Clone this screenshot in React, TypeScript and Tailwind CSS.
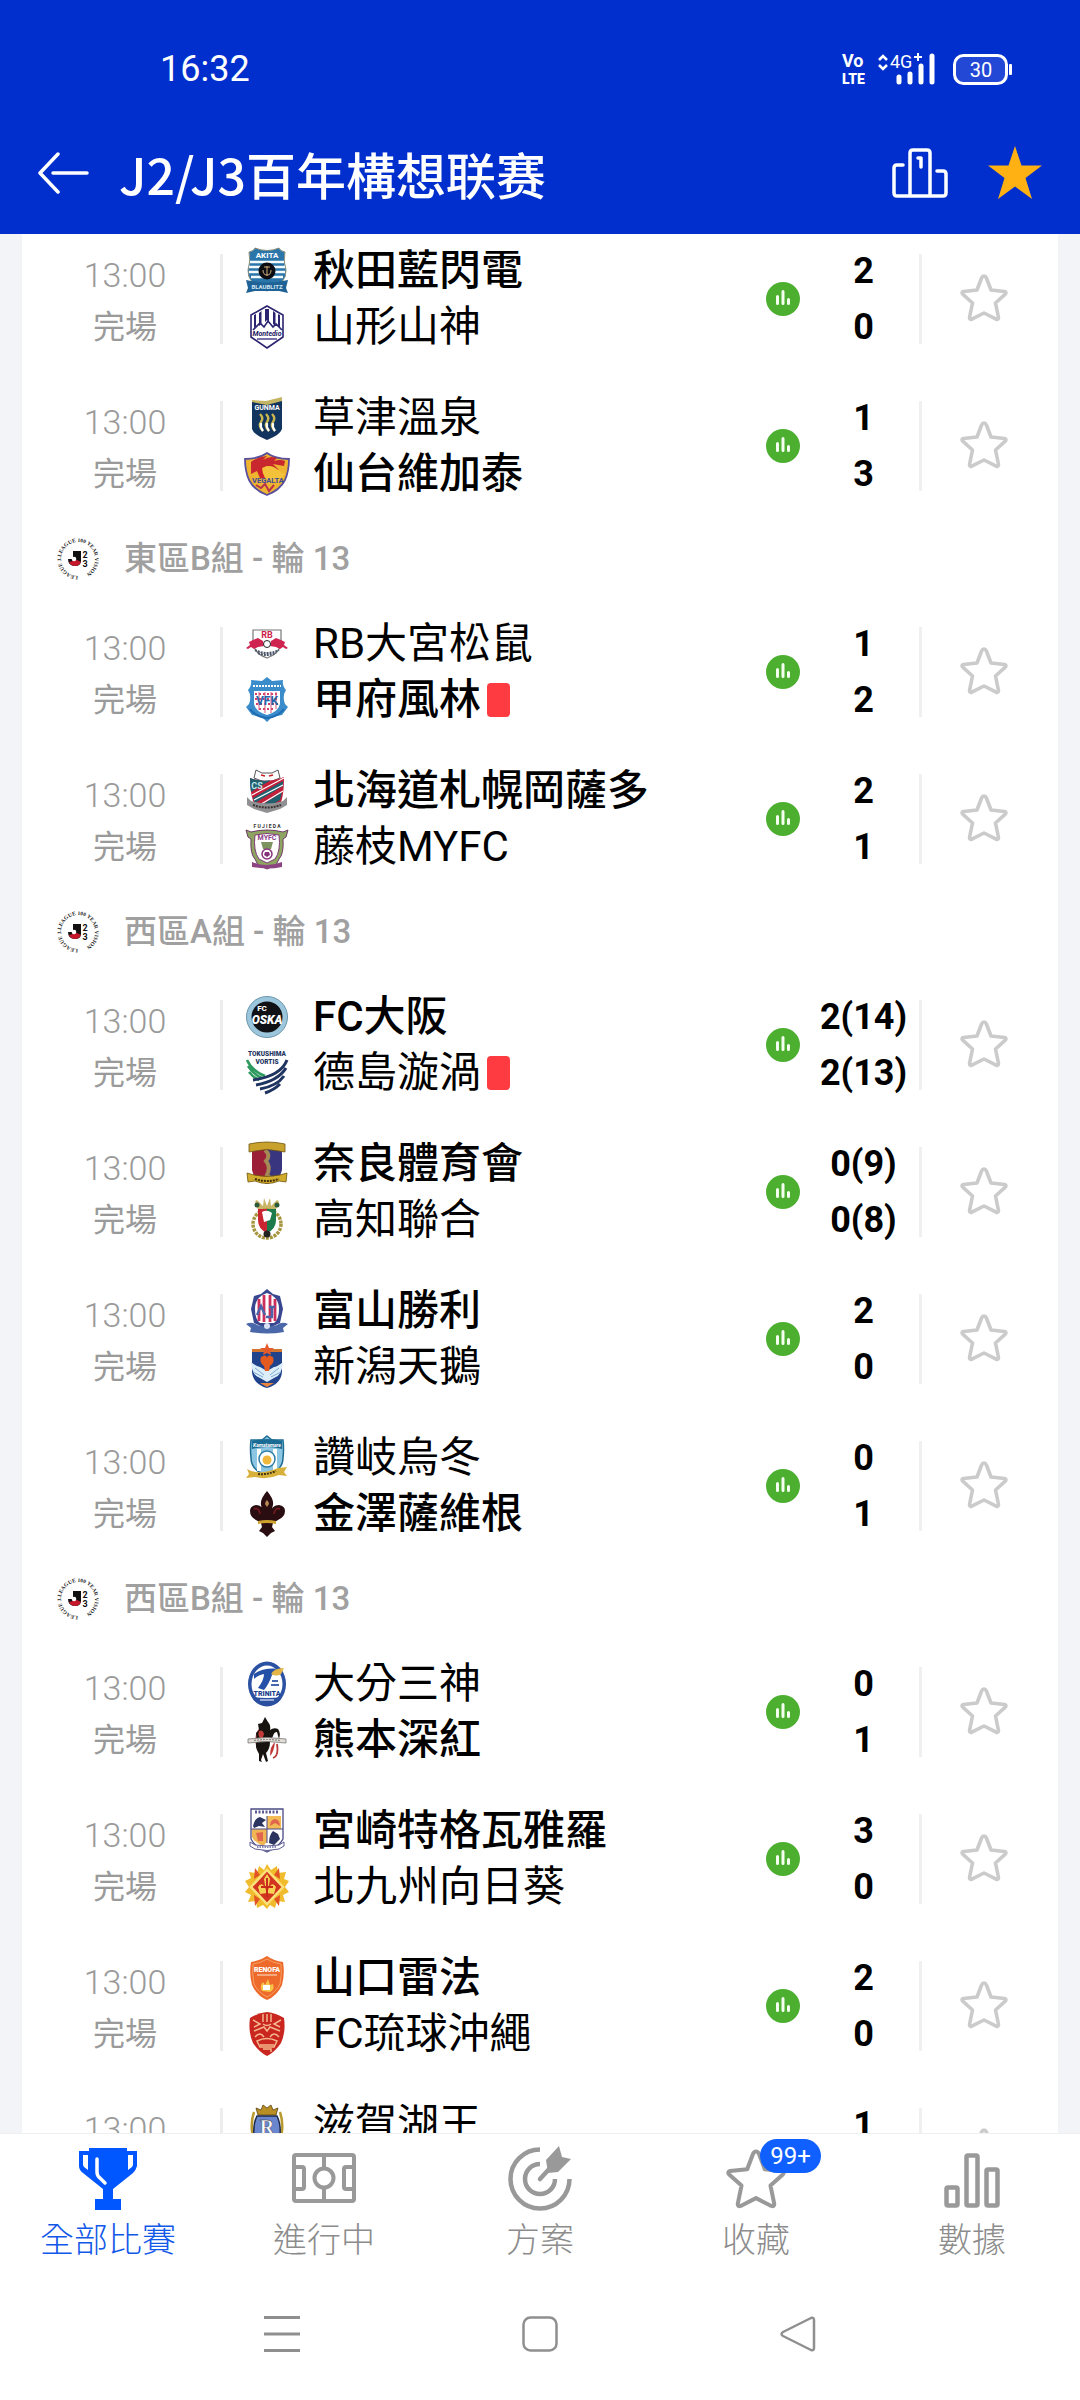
import type { ReactNode } from "react";

type Side = { name: string; crest: string; score: string; win?: boolean; red?: boolean };
type Match = { home: Side; away?: Side };
type Group = { title?: string; matches: Match[] };

const groups: Group[] = [
  {
    matches: [
      {
        home: { name: "秋田藍閃電", crest: "akita", score: "2", win: true },
        away: { name: "山形山神", crest: "yamagata", score: "0" },
      },
      {
        home: { name: "草津溫泉", crest: "gunma", score: "1" },
        away: { name: "仙台維加泰", crest: "sendai", score: "3", win: true },
      },
    ],
  },
  {
    title: "東區B組 - 輪 13",
    matches: [
      {
        home: { name: "RB大宮松鼠", crest: "omiya", score: "1" },
        away: { name: "甲府風林", crest: "kofu", score: "2", win: true, red: true },
      },
      {
        home: { name: "北海道札幌岡薩多", crest: "sapporo", score: "2", win: true },
        away: { name: "藤枝MYFC", crest: "fujieda", score: "1" },
      },
    ],
  },
  {
    title: "西區A組 - 輪 13",
    matches: [
      {
        home: { name: "FC大阪", crest: "osaka", score: "2(14)", win: true },
        away: { name: "德島漩渦", crest: "tokushima", score: "2(13)", red: true },
      },
      {
        home: { name: "奈良體育會", crest: "nara", score: "0(9)", win: true },
        away: { name: "高知聯合", crest: "kochi", score: "0(8)" },
      },
      {
        home: { name: "富山勝利", crest: "toyama", score: "2", win: true },
        away: { name: "新潟天鵝", crest: "niigata", score: "0" },
      },
      {
        home: { name: "讚岐烏冬", crest: "sanuki", score: "0" },
        away: { name: "金澤薩維根", crest: "kanazawa", score: "1", win: true },
      },
    ],
  },
  {
    title: "西區B組 - 輪 13",
    matches: [
      {
        home: { name: "大分三神", crest: "oita", score: "0" },
        away: { name: "熊本深紅", crest: "kumamoto", score: "1", win: true },
      },
      {
        home: { name: "宮崎特格瓦雅羅", crest: "miyazaki", score: "3", win: true },
        away: { name: "北九州向日葵", crest: "kitakyushu", score: "0" },
      },
      {
        home: { name: "山口雷法", crest: "yamaguchi", score: "2", win: true },
        away: { name: "FC琉球沖繩", crest: "ryukyu", score: "0" },
      },
      {
        home: { name: "滋賀湖王", crest: "shiga", score: "1" },
      },
    ],
  },
];

const crests: Record<string, ReactNode> = {
  akita: (
    <>
      <path d="M4 3q5-1 6-4 12 5 24 0 1 3 6 4-2 9 1 18 1 14-19 21Q2 35 3 21 6 12 4 3z" fill="#2a76ab" stroke="#8b8f7c" strokeWidth="1" />
      <path d="M5 13h34M4 18h36M4 23h36M6 28h32" stroke="#f4fbff" strokeWidth="2.4" />
      <circle cx="22" cy="22" r="8.5" fill="#0c0d12" />
      <path d="M22 17v10M18 21q0 5 4 5t4-5M19 18h6" fill="none" stroke="#cfae7a" strokeWidth="1" />
      <path d="M1 31q20 5 42 0l-2 8 2 5-9-2H10l-9 2 2-5z" fill="#1f6396" />
      <text x="22" y="9" textAnchor="middle" fontSize="8" fontWeight="700" fill="#fff">AKITA</text>
      <text x="22" y="40" textAnchor="middle" fontSize="6" fontWeight="700" fill="#cfe6f4">BLAUBLITZ</text>
    </>
  ),
  yamagata: (
    <>
      <path d="M22 1l16 9v22L22 43 6 32V10z" fill="#fff" stroke="#2a2370" strokeWidth="1.6" />
      <path d="M9 10l2-1v12l-2 2zM14 8l2.500-2v13l-2.500 2zM20 4l4 0v13l-2-2-2 2zM28 6l2.500 2v13L28 19zM33 9l2 1v13l-2-2z" fill="#2a2370" />
      <path d="M8 25l7-7 4 4 4-6 5 6 3-3 6 6" fill="none" stroke="#2a2370" strokeWidth="1.6" />
      <text x="22" y="31" textAnchor="middle" fontSize="7" fontStyle="italic" fontWeight="700" fill="#1b1763">Montedio</text>
      <path d="M12 34h20" stroke="#4a448c" strokeWidth="1.500" />
    </>
  ),
  gunma: (
    <>
      <path d="M7 5l14 1 16-4v31q-2 6-15 11Q9 39 7 33z" fill="#12355f" />
      <path d="M7 4l14 1 16-4v4L22 9 7 6z" fill="#c4b565" />
      <text x="22" y="14" textAnchor="middle" fontSize="7" fontWeight="700" fill="#fff">GUNMA</text>
      <path d="M15 18q4 4 1 8t2 9M21 18q4 4 1 8t2 9M27 18q4 4 1 8t2 9" fill="none" stroke="#c9b64f" strokeWidth="2.400" />
      <path d="M16 27q-1 4 2 8M22 27q-1 4 2 8M28 27q-1 4 2 8" fill="none" stroke="#fff" strokeWidth="2.200" />
    </>
  ),
  sendai: (
    <>
      <path d="M22 1q8 6 22 6 0 12-4 21-5 10-18 15Q9 38 4 28 0 19 0 7q14 0 22-6z" fill="#eeb32f" stroke="#5a509c" strokeWidth="1.800" />
      <path d="M6 10Q12 5 22 4l-4 4q7-5 14-2l-3 3q6-2 11 0l-1 5-11-2 6 6-12-4-6 3-10 5z" fill="#c8272f" />
      <path d="M12 19l6-5 7 5-2 8-8-1z" fill="#ce2129" />
      <path d="M17 16q9-5 16 2l7 4q-5 9-14 8-8-2-9-14z" fill="#f3c13a" />
      <path d="M11 33l5 3 4-4 4 7 5-6" fill="none" stroke="#b9344a" strokeWidth="2" />
      <text x="23" y="31" textAnchor="middle" fontSize="7.500" fontWeight="700" fill="#3e4a9b">VEGALTA</text>
    </>
  ),
  omiya: (
    <>
      <path d="M8 8h28v14q-2 10-14 14Q10 32 8 22z" fill="#fff" stroke="#777" strokeWidth="1.200" />
      <text x="22" y="16" textAnchor="middle" fontSize="9" fontWeight="700" fill="#d0214b">RB</text>
      <path d="M1 26l4-3-1-3 4-2 5-2 5 3 1 5-6 1-4 2-3-2-3 2zM43 26l-4-3 1-3-4-2-5-2-5 3-1 5 6 1 4 2 3-2 3 2z" fill="#cf2350" />
      <circle cx="22" cy="22" r="3.500" fill="#fff" stroke="#222" />
      <path d="M10 28q12 6 24 0M13 31q9 4 18 0" fill="none" stroke="#4a5568" strokeWidth="2" strokeDasharray="2 1" />
    </>
  ),
  kofu: (
    <>
      <path d="M22-1l5 4 11-1q-1 6 3 10-4 6-1 14l3 3-6 8-10 2-5 5-5-5-10-2-6-8 3-3Q7 18 3 12 7 8 6 2l11 1z" fill="#3a8ccb" />
      <path d="M9 13h26v13q-2 8-13 11Q11 34 9 26z" fill="#fff" />
      <path d="M10 16h24M10 21h24M11 26h22M14 31h16" stroke="#d2406a" strokeWidth="1.800" strokeDasharray="2 2" />
      <path d="M14 14v18M20 14v21M26 14v21M31 14v17" stroke="#db5b7e" strokeWidth="1" />
      <path d="M8 8h28" stroke="#fff" strokeWidth="2" strokeDasharray="2 1" />
      <text x="22" y="27" textAnchor="middle" fontSize="12" fontWeight="700" fill="#2467ac">VFK</text>
      <path d="M5 31q6 8 17 9 11-1 17-9" fill="none" stroke="#1d6bb3" strokeWidth="2" />
    </>
  ),
  sapporo: (
    <>
      <path d="M11 1l6 3h10l6-3 2 8-13 5L9 9z" fill="#fff" stroke="#555" />
      <path d="M16 6l4 1M28 6l-4 1" stroke="#c22" strokeWidth="1.500" />
      <path d="M5 9q17 6 34-1 0 22-5 29L22 43 10 37Q5 26 5 9z" fill="#c2203a" />
      <path d="M5 9q10 4 21 2L6 23q-1-6-1-14zM8 29L38 12v5L10 34zM14 38l23-15-2 8-15 9z" fill="#1f5f6e" />
      <path d="M7 26L39 9M9 31l29-15M13 37l25-15" stroke="#fff" strokeWidth="1.200" />
      <text x="12" y="20" textAnchor="middle" fontSize="9" fontWeight="700" fill="#bfe4e8">CS</text>
      <path d="M2 28l4 4q16 5 32 0l4-4v8l-7 4-13 4-13-4-7-4z" fill="#8f9092" />
      <path d="M8 36q14 5 28 0" stroke="#3b3032" strokeWidth="2" fill="none" strokeDasharray="2 1" />
    </>
  ),
  fujieda: (
    <>
      <text x="22" y="3" textAnchor="middle" fontSize="5" fontWeight="700" fill="#333">F U J I E D A</text>
      <path d="M6 7q16-4 32 0l5-2-2 7-3 2q1 15-4 20l-3 6-9 4-9-4-3-6Q5 29 6 14l-3-2-2-7z" fill="#8da561" stroke="#6e3a67" />
      <path d="M10 10q12-3 24 0 2 16-4 24l-8 4-8-4Q8 26 10 10z" fill="#fff" stroke="#7d3b75" />
      <text x="22" y="15" textAnchor="middle" fontSize="7" fontWeight="700" fill="#8a3b86">MYFC</text>
      <path d="M16 17h12l-2 7h-8z" fill="#7c9360" />
      <circle cx="22" cy="29" r="5" fill="#fff" stroke="#85327c" strokeWidth="1.500" />
      <path d="M20 27h4l1 3-3 2-3-2z" fill="#85327c" />
      <path d="M7 37q15 6 30 0v5q-15 3-30 0z" fill="#8c4483" />
    </>
  ),
  osaka: (
    <>
      <circle cx="22" cy="22" r="20.500" fill="#9cc6dc" stroke="#6b97ae" strokeWidth="1" />
      <circle cx="22" cy="22" r="15.500" fill="#101216" />
      <text x="17" y="16" textAnchor="middle" fontSize="8" fontWeight="900" fill="#fff">FC</text>
      <text x="22" y="29" textAnchor="middle" fontSize="12" fontWeight="900" fontStyle="italic" fill="#fff">OSKA</text>
    </>
  ),
  tokushima: (
    <>
      <path d="M2 0h40Q44 30 22 44 0 30 2 0z" fill="#fff" />
      <text x="22" y="5" textAnchor="middle" fontSize="6.500" fontWeight="900" fill="#23355f">TOKUSHIMA</text>
      <text x="22" y="13" textAnchor="middle" fontSize="6.500" fontWeight="900" fill="#23355f">VORTIS</text>
      <path d="M2 9q5 11 18 16M3 15q6 9 14 12M4 21q6 7 10 8" fill="none" stroke="#2f9a5f" strokeWidth="2.600" />
      <path d="M42 9Q36 25 8 29M41 17Q33 30 11 34M39 25Q32 35 15 38M35 33q-6 6-15 9" fill="none" stroke="#1f3460" strokeWidth="3" />
    </>
  ),
  nara: (
    <>
      <path d="M7 7h15v35Q9 39 7 28z" fill="#9c1f38" />
      <path d="M22 7h15v21q-2 11-15 14z" fill="#39367f" />
      <path d="M20 8q6 5 1 11 5 6 1 14l3 3" fill="none" stroke="#a58a55" strokeWidth="4" />
      <path d="M4 2q18-4 36 0v8l-6-1q-12-3-24 0l-6 1z" fill="#c9a22d" stroke="#6f560f" strokeWidth=".8" />
      <path d="M2 31l7 2q13 3 26 0l7-2-1 9-7-1q-12 5-24 0l-7 1z" fill="#d1ab2c" stroke="#6f560f" strokeWidth=".8" />
      <path d="M10 37q12 4 24 0" stroke="#3c2c08" strokeWidth="2" fill="none" strokeDasharray="2 1" />
    </>
  ),
  kochi: (
    <>
      <path d="M13 11Q8 3 12 2l6 6 1-8 3 8 3-8 1 8 6-6q4 1-1 9z" fill="#c8b566" />
      <circle cx="12" cy="7" r="2.500" fill="#2c5a3b" />
      <circle cx="32" cy="7" r="2.500" fill="#2c5a3b" />
      <circle cx="22" cy="26" r="14" fill="none" stroke="#a7963f" strokeWidth="3.500" strokeDasharray="3 1" />
      <path d="M13 11h9v24Q13 31 13 22z" fill="#cc2532" />
      <path d="M22 11h9v11q0 9-9 13z" fill="#1d7a4a" />
      <path d="M17 14q5-3 10 1l-2 7-6 2z" fill="#fff" />
      <circle cx="22" cy="36" r="3.500" fill="#222" />
    </>
  ),
  toyama: (
    <>
      <path d="M22 0l6 5 7 2 3 13-3 14-13 6L9 34 6 20 9 7l7-2z" fill="#38478f" />
      <path d="M22 4q12 4 12 16 0 10-5 14H15q-5-4-5-14Q10 8 22 4z" fill="#fff" />
      <path d="M14 10v22M19 6v27M25 6v27M30 10v22" stroke="#cd2f5c" strokeWidth="2.800" />
      <path d="M12 26l4-9 4 9M24 18h6M27 18v9M21 28h7" fill="none" stroke="#4c63a8" strokeWidth="2.400" />
      <path d="M1 35q6-3 11 1 10 3 20 0 5-4 11-1l-5 4 1 4q-17 3-34 0l1-4z" fill="#4a67aa" />
      <circle cx="22" cy="37" r="3" fill="#d8e2f2" />
    </>
  ),
  niigata: (
    <>
      <path d="M7 6h30v21q-1 12-15 16Q8 39 7 27z" fill="#21438c" />
      <path d="M7 4h30v3H7z" fill="#d37330" />
      <path d="M22-2l2 5h5l-4 3 1 4-4-2-4 2 1-4-4-3h5z" fill="#e45a2a" />
      <path d="M6 17q6 5 9 5l7 4 7-4q3 0 9-5-1 14-9 16l-7 4-7-4q-8-2-9-16z" fill="#dceefa" />
      <path d="M10 23l9 7M8 27l10 5M34 23l-9 7M36 27l-10 5" stroke="#7fa9d2" strokeWidth="1" />
      <path d="M16 12q6-4 6 2 0-6 6-2 2 6-3 9l-1 5h-4l-1-5q-5-3-3-9z" fill="#e55a1f" />
      <path d="M15 38h14l-7 4z" fill="#e9873f" />
    </>
  ),
  sanuki: (
    <>
      <path d="M22 0l5 4 11 0q1 9 0 18 0 12-16 18Q6 34 6 22 5 13 6 4l11 0z" fill="#8cc6e2" stroke="#1d6c93" strokeWidth="1.500" />
      <path d="M14 13v22M30 13v22" stroke="#fff" strokeWidth="4" />
      <path d="M7 5q15-4 30 0v8q-15-4-30 0z" fill="#1b6c94" />
      <text x="22" y="11" textAnchor="middle" fontSize="5" fontStyle="italic" fontWeight="700" fill="#fff">Kamatamare</text>
      <circle cx="22" cy="23" r="8" fill="#fff" stroke="#2f7ca4" strokeWidth="1.500" />
      <circle cx="22" cy="24" r="4.500" fill="#f0b83d" />
      <path d="M2 33q5 3 9 3 11 1 22-4l9-1-3 5 3 4-8-1q-12 5-24 2l-9 1 3-4z" fill="#d7b13a" />
      <path d="M13 38q9 1 18-3" fill="none" stroke="#413414" strokeWidth="2" strokeDasharray="2 1" />
    </>
  ),
  kanazawa: (
    <>
      <path d="M22-1q7 8 6 14-1 5-3 8 2-8 9-8 6 1 6 6 0 6-7 9l-5 3-1 4 3 4-4 2-4 4-4-4-4-2 3-4-1-4-5-3Q5 25 5 19q0-5 6-6 7 0 8 8-2-3-3-8-1-6 6-14z" fill="#2a0d10" />
      <path d="M22 8q2 2 2 4l-2 3-2-3q0-2 2-4z" fill="#b78a55" />
      <path d="M13 29q9-2 18 0v3q-9-2-18 0z" fill="#cfa22d" />
      <path d="M9 17q5-2 6 5M35 17q-5-2-6 5" fill="none" stroke="#7d1b20" strokeWidth="1.500" />
    </>
  ),
  oita: (
    <>
      <ellipse cx="22" cy="22" rx="19" ry="22.500" fill="#2b51a3" />
      <ellipse cx="22" cy="22" rx="15.500" ry="18.500" fill="#fff" />
      <path d="M9 12q10-7 27-5l-9 6q-3 9-8 15l-6-2q6-8 6-14-6 1-10 5z" fill="#2450a8" />
      <path d="M26 12q3-6 13-6l-3 6q-4 3-10 0z" fill="#e5b545" />
      <path d="M7 35q15 2 30 0-4 8-15 9Q11 43 7 35z" fill="#2b4f9f" />
      <text x="22" y="34" textAnchor="middle" fontSize="7" fontWeight="900" fill="#1d3f8d">TRINITA</text>
      <path d="M15 38h14" stroke="#b9caea" strokeWidth="1.500" />
      <path d="M27 19h6M26 23h8" stroke="#4567af" strokeWidth="2" />
    </>
  ),
  kumamoto: (
    <>
      <path d="M12 28q-3-14 6-19M32 26q2 12-4 14" fill="none" stroke="#b83a3a" strokeWidth="1.800" />
      <path d="M20-1l3 5q3 3 2 8 4-3 8-1 3 4 1 10l-2-7q-3 0-4 4l-3 6q0 7-4 11l2 8-2 1-3-8-2 6 1 2-3-1v-7q-5-8-2-14l-1-7 3-3-1-6 4-1z" fill="#17130f" />
      <path d="M14 13q4-2 5 3l-2 6q-5-3-3-9zM30 24q-1 10-5 14 0-10 5-14z" fill="#c23a38" />
      <path d="M3 21q19-3 38 0v4q-19-3-38 0z" fill="#e3dfd8" stroke="#777" strokeWidth=".8" />
      <path d="M9 22.500q13-2 26 0" stroke="#8d8780" strokeWidth="1.200" fill="none" strokeDasharray="2 1" />
    </>
  ),
  miyazaki: (
    <>
      <path d="M6 0h32v30q-4 8-16 13Q10 38 6 30z" fill="#fff" stroke="#4b4b86" strokeWidth="1.300" />
      <path d="M10 3h24" stroke="#5b5b91" strokeWidth="3" strokeDasharray="2 1.500" />
      <path d="M22 7h14v13H22z" fill="#f3bb55" />
      <path d="M7 20h15v13l-4 4Q9 33 7 28z" fill="#f1b654" />
      <path d="M8 17q1-7 7-9l6 3-4 3 3 4-6-1-5 2zM24 34q0-8 4-12l5 3 2 5-6 6z" fill="#2c3560" />
      <path d="M25 17q0-6 5-7 5 1 5 7l-5-3zM11 24l7-1v9h-5z" fill="#e1664e" />
      <path d="M22 7v27M6 20h32" stroke="#4b4b86" />
      <path d="M5 33l5 3q12 2 24 0l5-3v4l-5 3q-12 3-24 0l-5-3z" fill="#fff" stroke="#5c5c92" />
      <path d="M12 38h20" stroke="#8a8ab4" strokeWidth="2" strokeDasharray="1.500 1" />
    </>
  ),
  kitakyushu: (
    <>
      <path d="M22-1l4 6 6-4 1 7 8-1-2 7 5 2-4 6 4 5-6 3 2 7-8-1-2 7-5-3-3 4-4-4-6 3-1-7-8 1 3-7-6-3 4-5-4-6 6-3-2-6 8 1 2-7 5 4z" fill="#f0bb2d" />
      <path d="M10 3l5 7-6 4zM34 3l-5 7 6 4zM10 41l5-7-6-4zM34 41l-5-7 6-4z" fill="#e15322" />
      <path d="M22 5l16 17-16 17L6 22z" fill="#d23420" stroke="#fbe17a" strokeWidth="2.500" />
      <path d="M22 9l3 5-3 18-3-18zM13 22q3-5 6-1l3 7-7 1zM31 22q-3-5-6-1l-3 7 7 1z" fill="#f7d154" />
      <path d="M22 13v19M16 22h12" stroke="#c82b1b" strokeWidth="2" />
    </>
  ),
  yamaguchi: (
    <>
      <path d="M22 0q7 5 16 6 2 12-1 23-5 11-15 15Q12 40 7 29 4 18 6 6q9-1 16-6z" fill="#ee6a2a" />
      <path d="M22 3q6 4 14 5 1 10-1 20-4 8-13 13Q13 36 9 28 7 18 8 8q8-1 14-5z" fill="none" stroke="#f6a065" />
      <text x="22" y="16" textAnchor="middle" fontSize="7" fontWeight="900" fill="#fff">RENOFA</text>
      <path d="M12 19h20" stroke="#fbd2b6" strokeWidth="1.200" />
      <path d="M17 35q-3-5 1-9l2 3 3-6 2 6 3-1q2 6-3 8z" fill="#f8c247" />
      <path d="M18 29h7v5h-7z" fill="#fff" />
    </>
  ),
  ryukyu: (
    <>
      <path d="M22 0q9 1 17 6 2 14-3 25-6 9-14 13Q14 40 8 31 3 20 5 6q8-5 17-6z" fill="#c9261f" />
      <path d="M18 2v8M22 2v8M26 2v8M8 8l7 4-6 3M36 8l-7 4 6 3M9 19l10-4 3 4 3-4 10 4M10 25q5-6 9 0M34 25q-5-6-9 0M12 29q10-5 20 0l-3 6H15zM15 33h14M18 37h8v3M18 12q4 3 8 0" fill="none" stroke="#f4b68c" strokeWidth="1.500" />
    </>
  ),
  shiga: (
    <>
      <path d="M13 12l-2-7 5 2 2-5 4 3 4-3 2 5 5-2-2 7z" fill="#b98f25" stroke="#5a430b" strokeWidth=".8" />
      <path d="M9 9q-4 12-1 25M35 9q4 12 1 25" fill="none" stroke="#b99a2f" strokeWidth="2.500" />
      <path d="M12 13h20q4 8 3 19-4 8-13 11Q13 40 9 32q-1-11 3-19z" fill="#6a86cf" stroke="#1e2a4a" strokeWidth="1.500" />
      <text x="22" y="31" textAnchor="middle" fontSize="20" fontWeight="700" fontFamily="Liberation Serif, serif" fill="#fff" stroke="#223" strokeWidth=".4">R</text>
    </>
  ),
};

function Crest({ id }: { id: string }) {
  return (
    <svg viewBox="0 0 44 44" className="w-11 h-11 shrink-0 overflow-visible" style={{ fontFamily: "Roboto, sans-serif" }} aria-hidden="true">
      {crests[id]}
    </svg>
  );
}

const LeagueLogo = () => (
  <svg viewBox="0 0 44 44" className="w-11 h-11 shrink-0 overflow-visible" aria-hidden="true">
    <defs>
      <path id="ring" d="M22 39a17 17 0 1 1 .1 0" />
    </defs>
    <text fontSize="5.400" fontWeight="700" fontFamily="Liberation Serif, serif" fill="#222">
      <textPath href="#ring">LEAGUE J.LEAGUE 100 YEAR VISION</textPath>
    </text>
    <path d="M17 14h8v10q0 5-6 5-7 0-7-7h5z" fill="#111" />
    <path d="M13 25q2 4 6 4t6-4l-4-2z" fill="#c5162a" />
    <circle cx="18" cy="22" r="2.300" fill="#fff" />
    <text x="29" y="21" textAnchor="middle" fontSize="9" fontWeight="700" fontFamily="Roboto, sans-serif" fill="#111">2</text>
    <text x="29" y="30" textAnchor="middle" fontSize="9" fontWeight="700" fontFamily="Roboto, sans-serif" fill="#111">3</text>
  </svg>
);

const STAR = "M25 2q1.500 0 2.400 2l4.600 12 13.500 1.500q2.500.7.800 2.700L36.500 29l3 14.500q0 2.500-2.300 1.700L25 39l-12.200 6.200q-2.300.8-2.300-1.700l3-14.500-9.800-8.800q-1.700-2 .8-2.700L18 16l4.600-12Q23.500 2 25 2z";

function TeamName({ side }: { side: Side }) {
  return (
    <div className="h-14 flex items-center">
      <Crest id={side.crest} />
      <span className={`ml-6 text-[42px] leading-[56px] whitespace-nowrap ${side.win ? "font-medium" : "font-normal"}`}>
        {side.name}
      </span>
      {side.red && <span className="ml-1.5 w-[23px] h-[34px] rounded-[4px] bg-[#fd3b40]" />}
    </div>
  );
}

function MatchRow({ match }: { match: Match }) {
  const { home, away } = match;
  return (
    <li className="h-[147px] flex items-center">
      <div className="w-[198px] pl-2 pt-1 shrink-0 flex flex-col items-center leading-[52px] text-[#9a9a9a]">
        <span className="text-[34px] font-light">13:00</span>
        <span className="text-[32px]">完場</span>
      </div>
      <div className="w-[3px] h-[90px] bg-[#ededed]" />
      <div className="ml-[22px] h-28 flex-1">
        <TeamName side={home} />
        {away && <TeamName side={away} />}
      </div>
      <svg viewBox="0 0 34 34" className="w-[34px] h-[34px] mr-2 shrink-0" aria-hidden="true">
        <circle cx="17" cy="17" r="17" fill="#4caf30" />
        <path d="M11.500 14.500v7M17 9.500v12M22.500 17.500v4" stroke="#f4fff0" strokeWidth="3" strokeLinecap="round" />
      </svg>
      <div className="w-[111px] h-28 shrink-0 flex flex-col items-center text-[36px] leading-[56px] font-bold">
        <span>{home.score}</span>
        {away && <span>{away.score}</span>}
      </div>
      <div className="w-[3px] h-[90px] bg-[#f0f0f0]" />
      <button type="button" aria-label="收藏" className="w-[136px] pr-3 h-full shrink-0 flex items-center justify-center">
        <svg viewBox="0 0 50 50" className="w-[50px] h-[50px]" fill="none" stroke="#cbcbcb" strokeWidth="3.600" strokeLinejoin="round">
          <path d={STAR} />
        </svg>
      </button>
    </li>
  );
}

const tabs: { label: string; icon: ReactNode; active?: boolean; badge?: string }[] = [
  {
    label: "全部比賽",
    active: true,
    icon: (
      <>
        <path d="M14 2h38v3h10v15q-1 4-4 7L38 43v10h8v11H20V53h8V43L8 27q-4-3-4-7V5h10z" fill="#0056ff" />
        <path d="M8 9h5v15l-4-3-1-2zM58 9h-5v15l4-3 1-2z" fill="#fff" />
        <path d="M22 13v13q0 4 3 6l5 5" fill="none" stroke="#fff" strokeWidth="3.500" strokeLinecap="round" />
      </>
    ),
  },
  {
    label: "進行中",
    icon: (
      <g fill="none" stroke="#999" strokeWidth="4">
        <rect x="3" y="9" width="60" height="46" rx="2" />
        <path d="M33 9v12M33 43v12M3 21h8q2 0 2 2v18q0 2-2 2H3M63 21h-8q-2 0-2 2v18q0 2 2 2h8" />
        <circle cx="33" cy="32" r="9.500" />
      </g>
    ),
  },
  {
    label: "方案",
    icon: (
      <>
        <path d="M33 3.500A29.500 29.500 0 1 0 62.500 33M33 18a15 15 0 1 0 15 15" fill="none" stroke="#999" strokeWidth="4.500" />
        <path d="M33 33l11-12" stroke="#999" strokeWidth="4.500" strokeLinecap="round" />
        <path d="M39 14l13-14 3 11 9 2-13 13-10 1z" fill="#999" />
      </>
    ),
  },
  {
    label: "收藏",
    badge: "99+",
    icon: (
      <g transform="translate(1.500 3) scale(1.260)">
        <path d={STAR} fill="none" stroke="#999" strokeWidth="3.200" strokeLinejoin="round" />
      </g>
    ),
  },
  {
    label: "數據",
    icon: (
      <g fill="none" stroke="#999" strokeWidth="4.500">
        <rect x="7.500" y="41.500" width="11" height="18" rx="1.500" />
        <rect x="27.500" y="9.500" width="11" height="50" rx="1.500" />
        <rect x="47.500" y="23.500" width="11" height="36" rx="1.500" />
      </g>
    ),
  },
];

export default function App() {
  return (
    <div className="h-screen flex flex-col overflow-hidden bg-[#f2f4f8] text-black font-[Roboto,'Noto_Sans_CJK_TC',sans-serif]">
      <header className="h-[234px] shrink-0 bg-[#002fcd] text-white">
        {/* Status bar */}
        <div className="h-[116px] pt-[22px] pl-[160px] pr-[67px] flex items-center justify-between">
          <span className="text-[36px]">16:32</span>
          <svg viewBox="0 0 172 34" className="w-[172px] h-[34px] overflow-visible" style={{ fontFamily: "Roboto, sans-serif" }} fill="#fff" aria-hidden="true">
            <text x="1" y="15" fontSize="18" fontWeight="700">Vo</text>
            <text x="1" y="32" fontSize="14" fontWeight="900">LTE</text>
            <path d="M38 8l4-4 4 4M38 13l4 4 4-4" fill="none" stroke="#fff" strokeWidth="2.500" />
            <text x="49" y="16" fontSize="18">4G</text>
            <path d="M73 5h8M77 1v8" stroke="#fff" strokeWidth="2" />
            <path d="M58 25v5M69 22v8M80 14v16M91 4v26" stroke="#fff" strokeWidth="5" strokeLinecap="round" />
            <rect x="113.500" y="3.500" width="52" height="28" rx="9" fill="#2448d6" stroke="#fff" strokeWidth="3" />
            <rect x="168" y="12" width="3" height="11" rx="1" />
            <text x="140" y="25" fontSize="20" textAnchor="middle">30</text>
          </svg>
        </div>
        {/* Title bar */}
        <div className="h-[113px] pl-[37px] pr-[38px] flex items-center">
          <button type="button" aria-label="返回">
            <svg viewBox="0 0 52 42" className="w-[52px] h-[42px]" fill="none" stroke="#fff" strokeWidth="3.500" strokeLinecap="round" strokeLinejoin="round">
              <path d="M21 2L3 21l18 19M16 21h34" />
            </svg>
          </button>
          <h1 className="ml-[30px] flex-1 text-[50px] leading-[64px] font-medium font-['Noto_Sans_CJK_TC',sans-serif]">J2/J3百年構想联赛</h1>
          <button type="button" aria-label="排名" className="mr-[40px]">
            <svg viewBox="0 0 56 52" className="w-14 h-[52px]" fill="none" stroke="#fff" strokeWidth="3.500" strokeLinejoin="round" strokeLinecap="round">
              <path d="M18 49V6q0-3 3-3h14q3 0 3 3v43M11 18H5q-3 0-3 3v25q0 3 3 3h46q3 0 3-3V27q0-3-3-3h-6" />
              <path d="M26 11h3v9" />
            </svg>
          </button>
          <button type="button" aria-label="已收藏">
            <svg viewBox="0 0 54 54" className="w-[54px] h-[54px]">
              <path d="M27 0l6.500 19.500H54L37.500 32 44 53 27 40.500 10 53l6.500-21L0 19.500h20.500z" fill="#ffb012" />
            </svg>
          </button>
        </div>
      </header>

      {/* Match list, scrolled slightly under the header */}
      <main className="flex-1 min-h-0 overflow-hidden px-[22px]">
        <div className="-mt-[9px] bg-white">
          {groups.map((group, i) => (
            <section key={i}>
              {group.title && (
                <div className="h-[79px] pl-[34px] flex items-center">
                  <LeagueLogo />
                  <h2 className="ml-6 text-[33px] leading-[40px] font-medium text-[#a0a0a0]">{group.title}</h2>
                </div>
              )}
              <ul>
                {group.matches.map((match) => (
                  <MatchRow key={match.home.name} match={match} />
                ))}
              </ul>
            </section>
          ))}
        </div>
      </main>

      <footer className="h-[267px] shrink-0 bg-white border-t border-[#f0f0f0]">
        <nav className="h-[134px] pt-3 grid grid-cols-5">
          {tabs.map((tab) => (
            <a key={tab.label} href="#" className="flex flex-col items-center">
              <span className="relative">
                <svg viewBox="0 0 66 66" className="w-[66px] h-[66px]" aria-hidden="true">
                  {tab.icon}
                </svg>
                {tab.badge && (
                  <span className="absolute left-[37px] -top-[7px] w-[61px] h-[34px] rounded-full bg-[#0f60ff] text-white text-[24px] leading-[34px] text-center">
                    {tab.badge}
                  </span>
                )}
              </span>
              <span className={`mt-2 text-[34px] leading-[40px] font-light ${tab.active ? "text-[#1258e8]" : "text-[#8c8c8c]"}`}>{tab.label}</span>
            </a>
          ))}
        </nav>
        {/* System navigation */}
        <div className="h-[132px] flex items-center justify-center gap-[222px]">
          <button type="button" aria-label="最近">
            <svg viewBox="0 0 36 36" className="w-9 h-9" stroke="#8f8f8f" strokeWidth="3">
              <path d="M0 1.500h36M0 18h36M0 34.500h36" />
            </svg>
          </button>
          <button type="button" aria-label="主頁">
            <svg viewBox="0 0 36 36" className="w-9 h-9" fill="none" stroke="#8f8f8f" strokeWidth="2.500">
              <rect x="1.500" y="1.500" width="33" height="33" rx="7" />
            </svg>
          </button>
          <button type="button" aria-label="上一頁">
            <svg viewBox="0 0 36 36" className="w-9 h-9" fill="none" stroke="#8f8f8f" strokeWidth="2.500" strokeLinejoin="round">
              <path d="M31 2q3-1 3 2v28q0 3-3 2L3 20q-3-2 0-4z" />
            </svg>
          </button>
        </div>
      </footer>
    </div>
  );
}
